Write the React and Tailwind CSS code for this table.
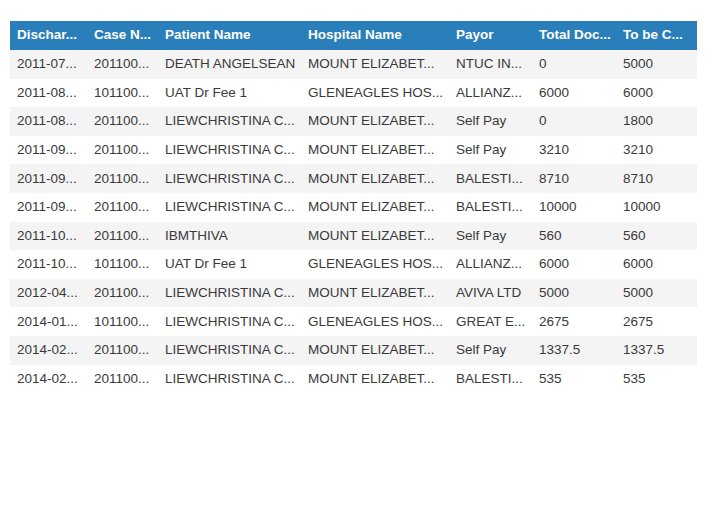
import React from "react";

const cols = [
  { name: "Dischar...", w: 77 },
  { name: "Case N...", w: 71 },
  { name: "Patient Name", w: 143 },
  { name: "Hospital Name", w: 148 },
  { name: "Payor", w: 83 },
  { name: "Total Doc...", w: 84 },
  { name: "To be C...", w: 81 },
];

const rows = [
  ["2011-07...", "201100...", "DEATH ANGELSEAN", "MOUNT ELIZABET...", "NTUC IN...", "0", "5000"],
  ["2011-08...", "101100...", "UAT Dr Fee 1", "GLENEAGLES HOS...", "ALLIANZ...", "6000", "6000"],
  ["2011-08...", "201100...", "LIEWCHRISTINA C...", "MOUNT ELIZABET...", "Self Pay", "0", "1800"],
  ["2011-09...", "201100...", "LIEWCHRISTINA C...", "MOUNT ELIZABET...", "Self Pay", "3210", "3210"],
  ["2011-09...", "201100...", "LIEWCHRISTINA C...", "MOUNT ELIZABET...", "BALESTI...", "8710", "8710"],
  ["2011-09...", "201100...", "LIEWCHRISTINA C...", "MOUNT ELIZABET...", "BALESTI...", "10000", "10000"],
  ["2011-10...", "201100...", "IBMTHIVA", "MOUNT ELIZABET...", "Self Pay", "560", "560"],
  ["2011-10...", "101100...", "UAT Dr Fee 1", "GLENEAGLES HOS...", "ALLIANZ...", "6000", "6000"],
  ["2012-04...", "201100...", "LIEWCHRISTINA C...", "MOUNT ELIZABET...", "AVIVA LTD", "5000", "5000"],
  ["2014-01...", "101100...", "LIEWCHRISTINA C...", "GLENEAGLES HOS...", "GREAT E...", "2675", "2675"],
  ["2014-02...", "201100...", "LIEWCHRISTINA C...", "MOUNT ELIZABET...", "Self Pay", "1337.5", "1337.5"],
  ["2014-02...", "201100...", "LIEWCHRISTINA C...", "MOUNT ELIZABET...", "BALESTI...", "535", "535"],
];

export default function App() {
  return (
    <div
      className="w-[718px] h-[522px] bg-white pt-[21px] pl-[10px]"
      style={{ fontFamily: '"Liberation Sans", Arial, sans-serif' }}
    >
      <table className="table-fixed border-collapse w-[687px] text-[13.5px]">
        <colgroup>
          {cols.map((c, i) => (
            <col key={i} style={{ width: c.w }} />
          ))}
        </colgroup>
        <thead>
          <tr className="bg-[#2a7eba] h-[29px]">
            {cols.map((c, i) => (
              <th
                key={i}
                className="text-left font-bold text-white pl-[7px] pr-0 py-0 whitespace-nowrap overflow-hidden"
              >
                {c.name}
              </th>
            ))}
          </tr>
        </thead>
        <tbody>
          {rows.map((r, ri) => (
            <tr
              key={ri}
              className={(ri % 2 === 0 ? "bg-[#f4f4f4] " : "bg-white ") + "h-[28.6px]"}
            >
              {r.map((v, ci) => (
                <td
                  key={ci}
                  className="text-[#3a3a3a] pl-[7px] pr-0 py-0 whitespace-nowrap overflow-hidden"
                >
                  {v}
                </td>
              ))}
            </tr>
          ))}
        </tbody>
      </table>
    </div>
  );
}
